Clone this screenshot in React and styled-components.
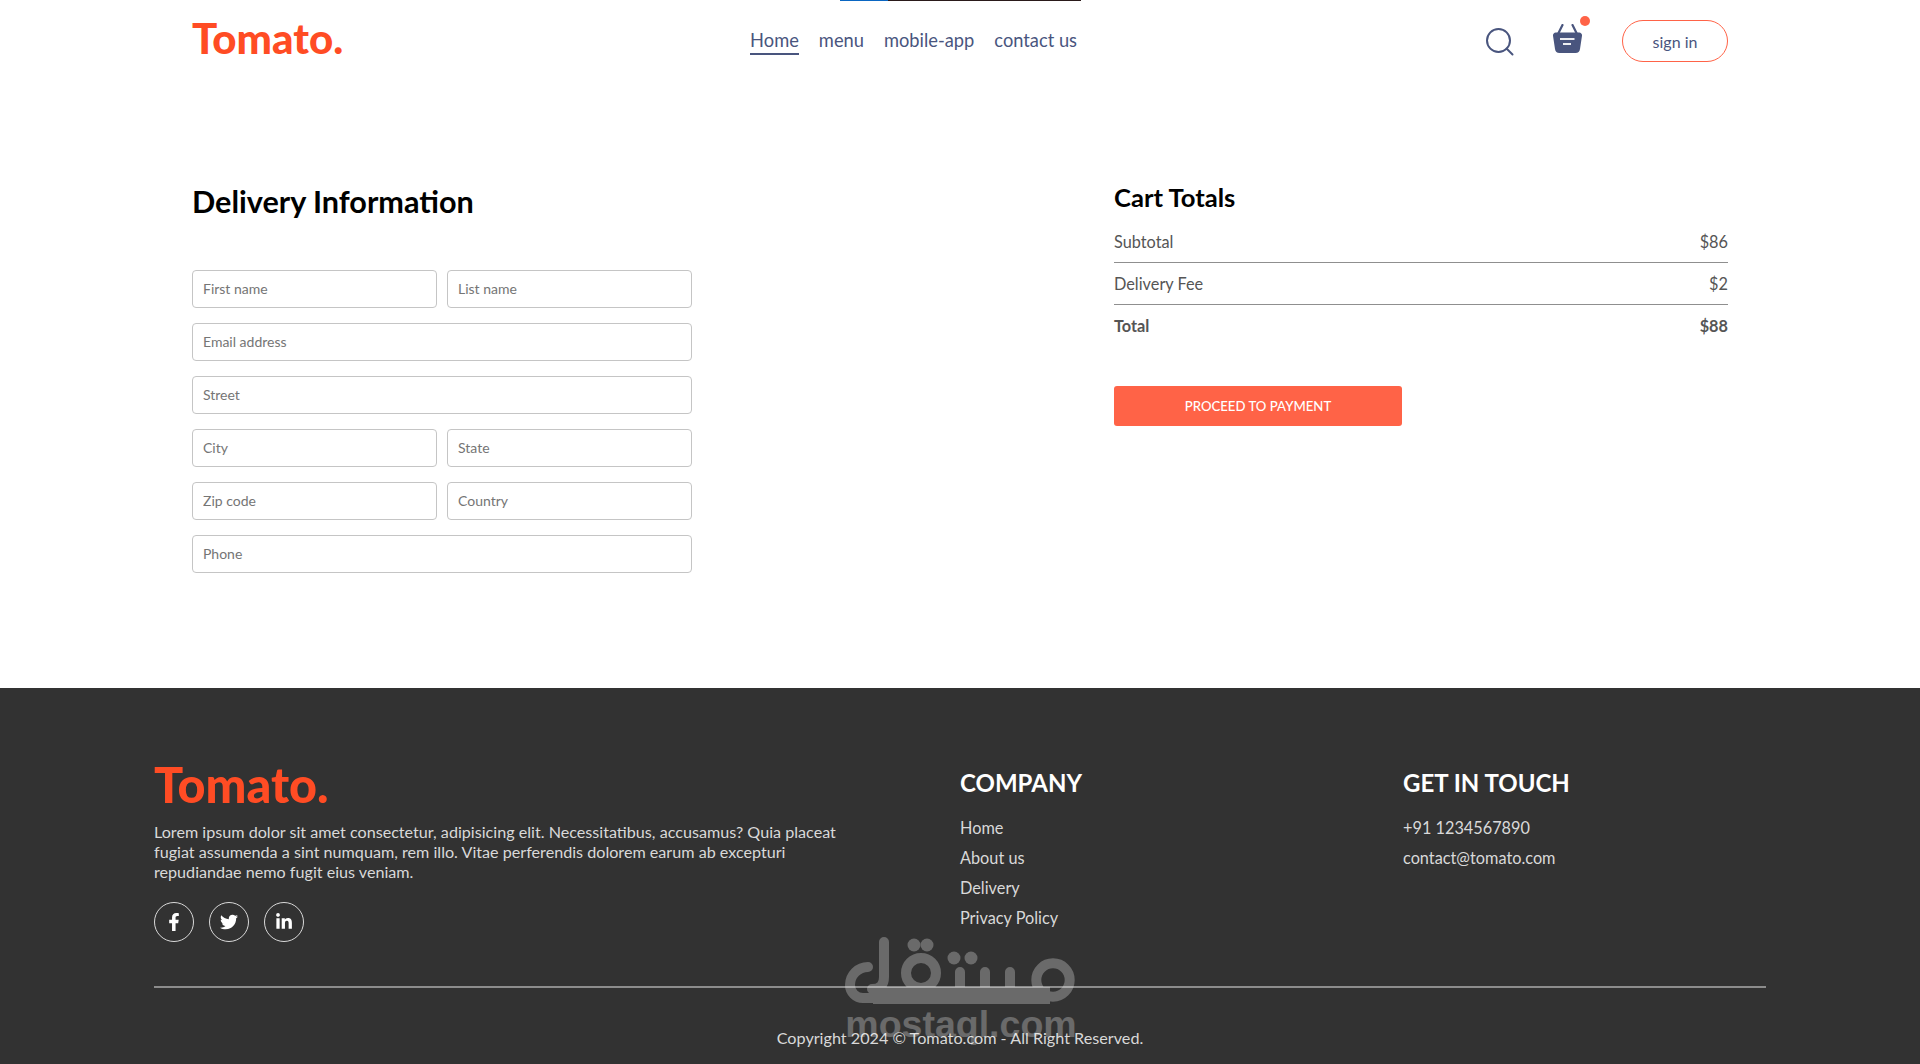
import React from "react";
import styled, { createGlobalStyle } from "styled-components";
import { FaFacebookF, FaTwitter, FaLinkedinIn } from "react-icons/fa";

const Global = createGlobalStyle`
  * {
    box-sizing: border-box;
  }
  html, body {
    margin: 0;
    background: #fff;
    font-family: Lato, "Noto Sans", sans-serif;
  }
`;

const Page = styled.div`
  position: relative;
  width: 1920px;
  height: 1064px;
  overflow: hidden;
  display: flex;
  flex-direction: column;
`;
const TopStrip = styled.div`
  position: absolute;
  top: 0;
  left: 840px;
  width: 241px;
  height: 1px;
  background: linear-gradient(to right, #0a66c2 48px, #2a1a1a 48px);
`;
const Navbar = styled.header`
  width: 1536px;
  height: 82px;
  margin: 0 auto;
  padding-top: 17px;
  display: flex;
  align-items: flex-start;
  justify-content: space-between;
`;
const Logo = styled.div`
  color: #ff4c24;
  font-size: ${(p) => p.$size}px;
  font-weight: 900;
  line-height: ${(p) => p.$line}px;
`;
const NavLinks = styled.nav`
  display: flex;
  gap: 20px;
  margin-left: -2px;
  padding-top: 12px;
`;
const NavLink = styled.a`
  color: #49557e;
  font-size: 18.3px;
  line-height: 22px;
  padding-bottom: 2px;
  border-bottom: 2px solid ${(p) => (p.$active ? "#49557e" : "transparent")};
`;
const NavRight = styled.div`
  display: flex;
  align-items: center;
  padding-top: 3px;
`;
const SearchBox = styled.div`
  height: 30px;
  padding-top: 2px;
`;
const BasketWrap = styled.div`
  position: relative;
  width: 29px;
  height: 34px;
  margin: 0 40px 0 39px;
`;
const Dot = styled.span`
  position: absolute;
  top: -8px;
  right: -8px;
  width: 10px;
  height: 10px;
  border-radius: 50%;
  background: tomato;
`;
const SignIn = styled.button`
  width: 106px;
  height: 42px;
  border: 1px solid tomato;
  border-radius: 50px;
  background: transparent;
  color: #49557e;
  font: 16px Lato, sans-serif;
`;
const Main = styled.main`
  width: 1536px;
  height: 606px;
  margin: 0 auto;
  padding-top: 98px;
  display: flex;
  justify-content: space-between;
`;
const FormCol = styled.section`
  width: 500px;
`;
const Title = styled.h2`
  margin: 1px 0 47px;
  color: #000;
  font-size: 30.6px;
  line-height: 42px;
  font-weight: 700;
`;
const Fields = styled.div`
  display: flex;
  flex-direction: column;
  gap: 15px;
`;
const Row = styled.div`
  display: flex;
  gap: 10px;
`;
const Input = styled.input`
  flex: 1;
  min-width: 0;
  height: 38px;
  padding: 0 10px 1px;
  border: 1px solid #c5c5c5;
  border-radius: 4px;
  outline: none;
  font: 14px Lato, sans-serif;
  &::placeholder {
    color: #757575;
  }
`;
const TotalsCol = styled.section`
  width: 614px;
`;
const CartTitle = styled.h2`
  margin: 0 0 17px;
  color: #000;
  font-size: 25.6px;
  line-height: 34px;
  font-weight: 700;
`;
const TotalRow = styled.div`
  display: flex;
  justify-content: space-between;
  color: #555;
  font-size: 16.3px;
  line-height: 22px;
  font-weight: ${(p) => (p.$bold ? 700 : 400)};
`;
const Rule = styled.hr`
  margin: 9px 0 10px;
  border: none;
  height: 1px;
  background: #8f8f8f;
`;
const PayButton = styled.button`
  display: block;
  width: 288px;
  height: 40px;
  margin-top: 49px;
  border: none;
  border-radius: 3px;
  background: tomato;
  color: #fff;
  font: 500 13.2px Lato, sans-serif;
`;
const Footer = styled.footer`
  position: relative;
  flex: 1;
  background: #323232;
  color: #d9d9d9;
  padding: 69px 154px 0;
`;
const FooterGrid = styled.div`
  display: grid;
  grid-template-columns: 806px 443px 1fr;
  height: 229px;
`;
const FooterAbout = styled.div`
  width: 700px;
`;
const Blurb = styled.p`
  margin: 10px 0 20px;
  font-size: 16.15px;
  line-height: 20px;
`;
const Socials = styled.div`
  display: flex;
  gap: 15px;
`;
const Social = styled.a`
  width: 40px;
  height: 40px;
  border: 1px solid #d9d9d9;
  border-radius: 50%;
  display: flex;
  align-items: center;
  justify-content: center;
  color: #fff;
  font-size: 18px;
`;
const ColTitle = styled.h3`
  margin: 0 0 19px;
  padding-top: 10px;
  color: #fff;
  font-size: 24px;
  line-height: 32px;
  font-weight: 700;
`;
const LinkList = styled.ul`
  margin: 0;
  padding: 0;
  list-style: none;
  display: flex;
  flex-direction: column;
  gap: 10px;
  font-size: 16.3px;
  line-height: 20px;
`;
const FooterRule = styled.hr`
  margin: 0;
  border: none;
  height: 1.5px;
  background: #8c8c8c;
`;
const Copyright = styled.p`
  margin: 40px 0 0;
  text-align: center;
  font-size: 16.2px;
  line-height: 20px;
`;
const Watermark = styled.div`
  position: absolute;
  left: 845px;
  top: 249px;
  width: 232px;
  display: flex;
  flex-direction: column;
  align-items: center;
  pointer-events: none;
  opacity: 0.27;
`;
const WatermarkText = styled.span`
  color: #fff;
  font: 700 37.5px/34px "Liberation Sans", sans-serif;
`;

const SearchIcon = () => (
  <svg width="28" height="28" viewBox="0 0 28 28" fill="none" stroke="#49557e" strokeWidth="2" display="block">
    <circle cx="12.5" cy="12.5" r="11.5" />
    <path d="M20.5 20.5l6 6" strokeLinecap="round" />
  </svg>
);

const BasketIcon = () => (
  <svg width="29" height="34" viewBox="0 0 29 34" fill="none" display="block">
    <path d="M9.5 1l-4 8M19.5 1l4 8" stroke="#49557e" strokeWidth="2.2" strokeLinecap="round" />
    <path
      d="M3 8.5h23a2.8 2.8 0 0 1 3 3.2l-2 13.3a4.6 4.6 0 0 1-4.5 4H6.5a4.6 4.6 0 0 1-4.5-4L0 11.7A2.8 2.8 0 0 1 3 8.5z"
      fill="#49557e"
    />
    <path d="M7 15h14.5M10 20h8" stroke="#fff" strokeWidth="1.8" opacity="0.9" />
  </svg>
);

const WatermarkLogo = () => (
  <svg width="232" height="70" viewBox="0 0 232 70" fill="none" stroke="#fff" strokeWidth="10" strokeLinecap="round" display="block">
    <path d="M23 30A18 18 0 0 0 5 48a13 13 0 0 0 13 13H30" />
    <path d="M39 5V40Q39 52 27 52" />
    <circle cx="76" cy="36" r="15" />
    <path d="M28 58.5H205" strokeWidth="17" strokeLinecap="butt" />
    <circle cx="208" cy="43" r="16.7" />
    <path d="M115 35v15M140 35v15M165 35v15" />
    <g fill="#fff" stroke="none">
      <circle cx="69" cy="8" r="6.5" />
      <circle cx="82" cy="8" r="6.5" />
      <circle cx="109" cy="21" r="6.5" />
      <circle cx="126" cy="21" r="6.5" />
    </g>
  </svg>
);

const Field = ({ items }) => (
  <Row>
    {items.map((label) => (
      <Input key={label} placeholder={label} />
    ))}
  </Row>
);

export default function App() {
  return (
    <Page>
      <Global />
      <TopStrip />
      <Navbar>
        <Logo $size={42} $line={42}>Tomato.</Logo>
        <NavLinks>
          <NavLink $active>Home</NavLink>
          <NavLink>menu</NavLink>
          <NavLink>mobile-app</NavLink>
          <NavLink>contact us</NavLink>
        </NavLinks>
        <NavRight>
          <SearchBox>
            <SearchIcon />
          </SearchBox>
          <BasketWrap>
            <BasketIcon />
            <Dot />
          </BasketWrap>
          <SignIn>sign in</SignIn>
        </NavRight>
      </Navbar>
      <Main>
        <FormCol>
          <Title>Delivery Information</Title>
          <Fields>
            <Field items={["First name", "List name"]} />
            <Field items={["Email address"]} />
            <Field items={["Street"]} />
            <Field items={["City", "State"]} />
            <Field items={["Zip code", "Country"]} />
            <Field items={["Phone"]} />
          </Fields>
        </FormCol>
        <TotalsCol>
          <CartTitle>Cart Totals</CartTitle>
          <TotalRow>
            <span>Subtotal</span>
            <span>$86</span>
          </TotalRow>
          <Rule />
          <TotalRow>
            <span>Delivery Fee</span>
            <span>$2</span>
          </TotalRow>
          <Rule />
          <TotalRow $bold>
            <span>Total</span>
            <span>$88</span>
          </TotalRow>
          <PayButton>PROCEED TO PAYMENT</PayButton>
        </TotalsCol>
      </Main>
      <Footer>
        <FooterGrid>
          <FooterAbout>
            <Logo $size={48.5} $line={55}>Tomato.</Logo>
            <Blurb>
              Lorem ipsum dolor sit amet consectetur, adipisicing elit. Necessitatibus, accusamus? Quia placeat fugiat
              assumenda a sint numquam, rem illo. Vitae perferendis dolorem earum ab excepturi repudiandae nemo fugit
              eius veniam.
            </Blurb>
            <Socials>
              <Social><FaFacebookF /></Social>
              <Social><FaTwitter /></Social>
              <Social><FaLinkedinIn /></Social>
            </Socials>
          </FooterAbout>
          <div>
            <ColTitle>COMPANY</ColTitle>
            <LinkList>
              <li>Home</li>
              <li>About us</li>
              <li>Delivery</li>
              <li>Privacy Policy</li>
            </LinkList>
          </div>
          <div>
            <ColTitle>GET IN TOUCH</ColTitle>
            <LinkList>
              <li>+91 1234567890</li>
              <li>contact@tomato.com</li>
            </LinkList>
          </div>
        </FooterGrid>
        <FooterRule />
        <Copyright>Copyright 2024 © Tomato.com - All Right Reserved.</Copyright>
        <Watermark>
          <WatermarkLogo />
          <WatermarkText>mostaql.com</WatermarkText>
        </Watermark>
      </Footer>
    </Page>
  );
}
